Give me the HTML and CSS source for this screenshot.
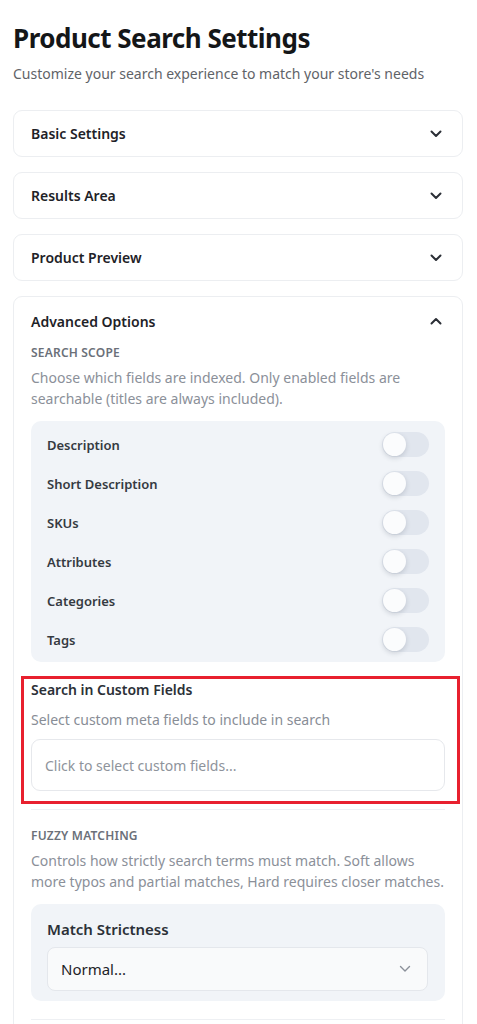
FILE: index.html
```html
<!DOCTYPE html>
<html lang="en">
<head>
<meta charset="utf-8">
<title>Product Search Settings</title>
<link rel="stylesheet" href="styles.css">
</head>
<body>
<main class="page">
  <h1 class="title">Product Search Settings</h1>
  <p class="subtitle">Customize your search experience to match your store's needs</p>

  <section class="card">
    <div class="card-head">
      <span class="card-title">Basic Settings</span>
      <svg class="chev" width="12" height="8" viewBox="0 0 12 8"><path d="M1.5 1.5 6 6 10.5 1.5" fill="none" stroke="#2b2f36" stroke-width="2" stroke-linecap="round" stroke-linejoin="round"/></svg>
    </div>
  </section>

  <section class="card">
    <div class="card-head">
      <span class="card-title">Results Area</span>
      <svg class="chev" width="12" height="8" viewBox="0 0 12 8"><path d="M1.5 1.5 6 6 10.5 1.5" fill="none" stroke="#2b2f36" stroke-width="2" stroke-linecap="round" stroke-linejoin="round"/></svg>
    </div>
  </section>

  <section class="card">
    <div class="card-head">
      <span class="card-title">Product Preview</span>
      <svg class="chev" width="12" height="8" viewBox="0 0 12 8"><path d="M1.5 1.5 6 6 10.5 1.5" fill="none" stroke="#2b2f36" stroke-width="2" stroke-linecap="round" stroke-linejoin="round"/></svg>
    </div>
  </section>

  <section class="card card-open">
    <div class="card-head">
      <span class="card-title">Advanced Options</span>
      <svg class="chev" width="12" height="8" viewBox="0 0 12 8"><path d="M1.5 6.5 6 2 10.5 6.5" fill="none" stroke="#2b2f36" stroke-width="2" stroke-linecap="round" stroke-linejoin="round"/></svg>
    </div>
    <div class="card-body">
      <div class="group">
        <div class="group-label">Search Scope</div>
        <p class="group-desc">Choose which fields are indexed. Only enabled fields are searchable (titles are always included).</p>
        <div class="panel toggles">
          <div class="toggle-row"><span class="toggle-label">Description</span><span class="toggle"><span class="knob"></span></span></div>
          <div class="toggle-row"><span class="toggle-label">Short Description</span><span class="toggle"><span class="knob"></span></span></div>
          <div class="toggle-row"><span class="toggle-label">SKUs</span><span class="toggle"><span class="knob"></span></span></div>
          <div class="toggle-row"><span class="toggle-label">Attributes</span><span class="toggle"><span class="knob"></span></span></div>
          <div class="toggle-row"><span class="toggle-label">Categories</span><span class="toggle"><span class="knob"></span></span></div>
          <div class="toggle-row"><span class="toggle-label">Tags</span><span class="toggle"><span class="knob"></span></span></div>
        </div>
        <div class="custom">
          <div class="custom-title">Search in Custom Fields</div>
          <div class="custom-desc">Select custom meta fields to include in search</div>
          <div class="custom-input">Click to select custom fields...</div>
          <div class="highlight"></div>
        </div>
      </div>
      <div class="group group-bordered">
        <div class="group-label">Fuzzy Matching</div>
        <p class="group-desc">Controls how strictly search terms must match. Soft allows more typos and partial matches, Hard requires closer matches.</p>
        <div class="panel select-panel">
          <div class="select-label">Match Strictness</div>
          <div class="select">
            <span>Normal...</span>
            <svg width="12" height="8" viewBox="0 0 12 8"><path d="M1.5 1.5 6 6 10.5 1.5" fill="none" stroke="#8a9099" stroke-width="1.4" stroke-linecap="round" stroke-linejoin="round"/></svg>
          </div>
        </div>
      </div>
      <div class="group group-bordered"></div>
    </div>
  </section>
</main>
</body>
</html>
```
FILE: styles.css
```css
* { box-sizing: border-box; }
html, body { margin: 0; padding: 0; background: #ffffff; }
body {
  font-family: "Noto Sans", "Open Sans", "Liberation Sans", sans-serif;
  color: #1f2328;
}
.page {
  width: 477px;
  padding: 20px 14px 0 13px;
}
.title {
  margin: 0;
  font-size: 26px;
  line-height: 36px;
  font-weight: 700;
  color: #141618;
  letter-spacing: -0.5px;
}
.subtitle {
  margin: 8px 0 0;
  font-size: 14px;
  line-height: 20px;
  color: #5f6368;
}
.card {
  margin-top: 26px;
  border: 1px solid #eceef1;
  border-radius: 9px;
  background: #fff;
  padding: 0 17px;
}
.card + .card { margin-top: 15px; }
.card-head {
  height: 45px;
  display: flex;
  align-items: center;
  justify-content: space-between;
}
.card-title {
  font-size: 14px;
  font-weight: 600;
  color: #1e2227;
}
.chev { margin-right: 3px; }
.card-open .card-head { height: 48px; }
.group-label {
  font-size: 12px;
  line-height: 16px;
  font-weight: 600;
  color: #6b7079;
  text-transform: uppercase;
  letter-spacing: 0.2px;
}
.group-desc {
  margin: 6px 0 0;
  font-size: 14px;
  line-height: 21px;
  color: #8b9099;
}
.panel {
  background: #f1f4f8;
  border-radius: 10px;
}
.toggles {
  margin-top: 12px;
  padding: 11px 16px 10px;
  display: flex;
  flex-direction: column;
  gap: 14px;
}
.toggle-row {
  height: 25px;
  display: flex;
  align-items: center;
  justify-content: space-between;
}
.toggle-label {
  font-size: 13px;
  font-weight: 600;
  color: #353a41;
}
.toggle {
  width: 47px;
  height: 25px;
  border-radius: 13px;
  background: #e1e6ee;
  position: relative;
}
.knob {
  position: absolute;
  left: 1px;
  top: 1px;
  width: 23px;
  height: 23px;
  border-radius: 50%;
  background: #fbfcfd;
  box-shadow: 0 2px 5px rgba(40, 50, 70, 0.18);
}
.custom {
  position: relative;
  margin-top: 18px;
}
.custom-title {
  font-size: 14px;
  line-height: 20px;
  font-weight: 600;
  color: #2b3037;
}
.custom-desc {
  margin-top: 10px;
  font-size: 14px;
  line-height: 20px;
  color: #888d96;
}
.custom-input {
  margin-top: 9px;
  height: 52px;
  border: 1px solid #e6e8ec;
  border-radius: 9px;
  padding: 0 13px;
  display: flex;
  align-items: center;
  font-size: 14px;
  color: #8e939b;
  background: #fff;
}
.highlight {
  position: absolute;
  left: -10px;
  right: -15px;
  top: -4px;
  bottom: -13px;
  border: 3px solid #e8202f;
  pointer-events: none;
}
.group-bordered {
  margin-top: 18px;
  border-top: 1px solid #eef0f3;
  padding-top: 18px;
}
.select-panel {
  margin-top: 12px;
  padding: 15px 17px 10px 16px;
}
.select-label {
  font-size: 15px;
  line-height: 20px;
  font-weight: 600;
  color: #2b3037;
}
.select {
  margin-top: 8px;
  height: 44px;
  background: #f9fafb;
  border: 1px solid #e4e7ec;
  border-radius: 8px;
  padding: 0 16px 0 13px;
  display: flex;
  align-items: center;
  justify-content: space-between;
  font-size: 15px;
  color: #1e2227;
}
```
